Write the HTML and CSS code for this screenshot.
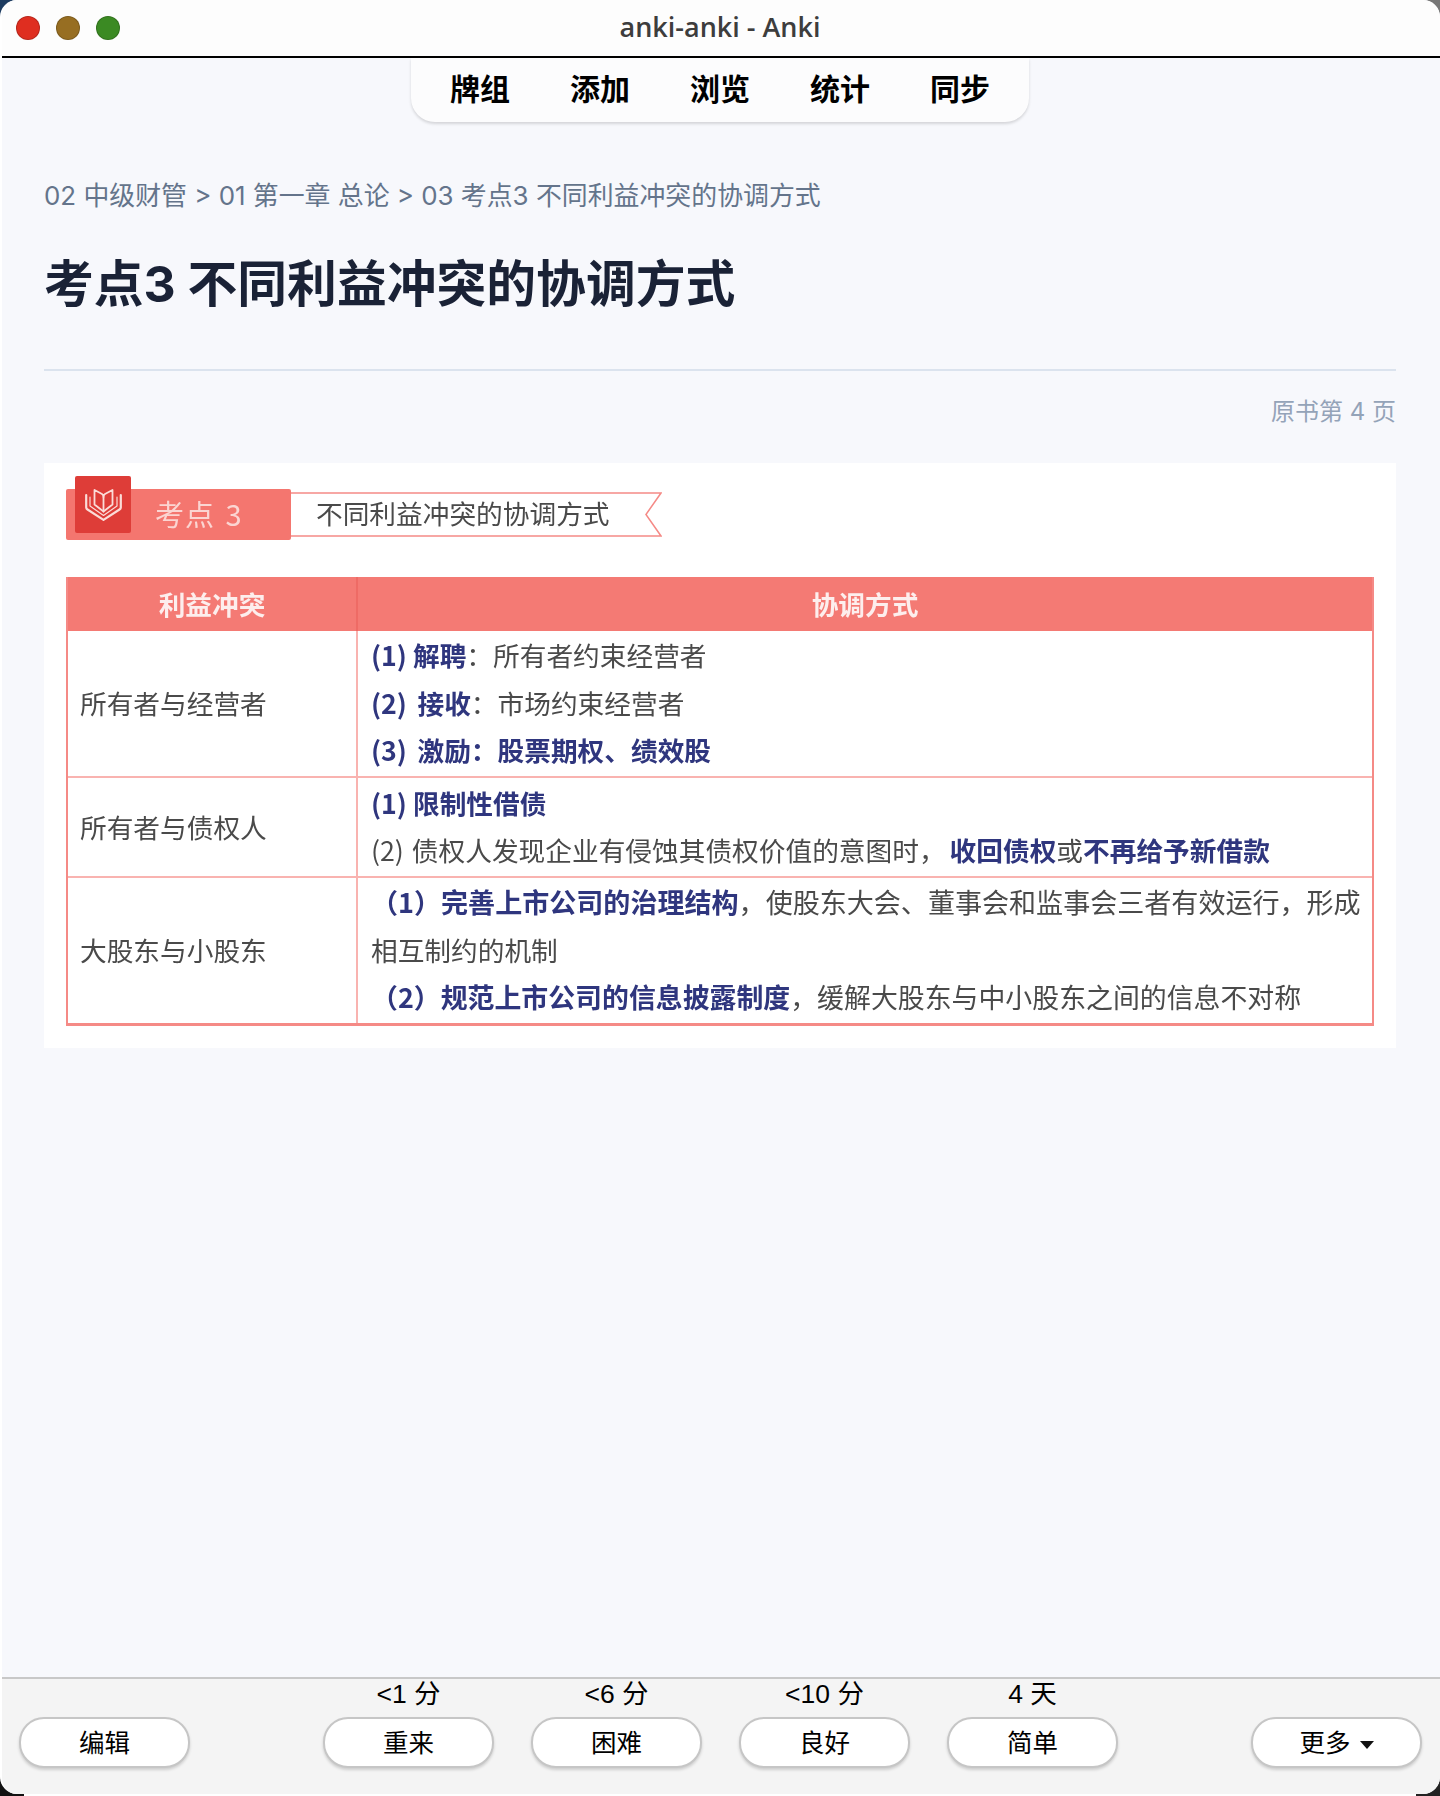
FILE: index.html
```html
<!DOCTYPE html>
<html lang="zh-CN">
<head>
<meta charset="utf-8">
<title>anki-anki - Anki</title>
<link rel="stylesheet" href="styles.css">
</head>
<body>
<div class="window">
  <header class="titlebar">
    <div class="lights"><span class="light red"></span><span class="light amber"></span><span class="light green"></span></div>
    <div class="wintitle">anki-anki - Anki</div>
  </header>
  <div class="navwrap">
    <nav class="nav"><a>牌组</a><a>添加</a><a>浏览</a><a>统计</a><a>同步</a></nav>
  </div>
  <main class="content">
    <div class="crumb">02 中级财管 &gt; 01 第一章 总论 &gt; 03 考点3 不同利益冲突的协调方式</div>
    <h1 class="title">考点3 不同利益冲突的协调方式</h1>
    <hr class="rule">
    <div class="page">原书第 4 页</div>
    <section class="figure">
      <div class="banner">
        <div class="tag">
          <span class="tagicon">
            <svg viewBox="0 0 37 33" width="37" height="33" fill="none" stroke="#fbdcd8" stroke-linejoin="round" stroke-linecap="round">
              <path stroke-width="2.200" d="M1.200 7V19.500C1.200 20.500 1.700 21 2.500 21.500L18.500 31.800L34.500 21.500C35.300 21 35.800 20.500 35.800 19.500V7"/>
              <path stroke-width="1.200" d="M5 9V18L18.500 27.500L32 18V9"/>
              <path stroke-width="1.800" d="M9.500 2L17 6C18 6.600 18.500 7.500 18.500 9C18.500 7.500 19 6.600 20 6L27.500 2V16.500L18.500 23.500L9.500 16.500Z"/>
              <path stroke-width="1.800" d="M18.500 9V23.500"/>
            </svg>
          </span>
          <span class="taglabel">考点 3</span>
        </div>
        <div class="ribbon">
          <svg class="ribbonbg" viewBox="0 0 370 45" preserveAspectRatio="none"><path d="M0 1H369L354 22.500L369 44H0" fill="#fff" stroke="#f58a86" stroke-width="1.500"/></svg>
          <span class="ribbontext">不同利益冲突的协调方式</span>
        </div>
      </div>
      <div class="table">
        <div class="thead">
          <div class="th c1">利益冲突</div>
          <div class="th c2">协调方式</div>
        </div>
        <div class="row r1">
          <div class="c1 cell">所有者与经营者</div>
          <div class="c2 lines">
            <p><b>(1) 解聘</b>：所有者约束经营者</p>
            <p class="wide"><b>(2) 接收</b>：市场约束经营者</p>
            <p class="wide"><b>(3) 激励：股票期权、绩效股</b></p>
          </div>
        </div>
        <div class="row r2">
          <div class="c1 cell">所有者与债权人</div>
          <div class="c2 lines">
            <p><b>(1) 限制性借债</b></p>
            <p class="spread">(2) 债权人发现企业有侵蚀其债权价值的意图时，<b class="aftercomma">收回债权</b>或<b>不再给予新借款</b></p>
          </div>
        </div>
        <div class="row r3">
          <div class="c1 cell">大股东与小股东</div>
          <div class="c2 lines">
            <p class="big"><b>（1）完善上市公司的治理结构</b>，使股东大会、董事会和监事会三者有效运行，形成</p>
            <p>相互制约的机制</p>
            <p class="mid"><b>（2）规范上市公司的信息披露制度</b>，缓解大股东与中小股东之间的信息不对称</p>
          </div>
        </div>
      </div>
    </section>
  </main>
  <footer class="bottombar">
    <div class="btncol"><span class="due"></span><button class="btn">编辑</button></div>
    <div class="answers">
      <div class="btncol"><span class="due">&lt;1 分</span><button class="btn">重来</button></div>
      <div class="btncol"><span class="due">&lt;6 分</span><button class="btn">困难</button></div>
      <div class="btncol"><span class="due">&lt;10 分</span><button class="btn">良好</button></div>
      <div class="btncol"><span class="due">4 天</span><button class="btn">简单</button></div>
    </div>
    <div class="btncol"><span class="due"></span><button class="btn">更多 <i class="caret"></i></button></div>
  </footer>
</div>
</body>
</html>
```

FILE: styles.css
```css
* { box-sizing: border-box; }
html, body { margin: 0; height: 100%; }
html {
  background:
    linear-gradient(#1c3b60, #1c3b60) 0 0 / 24px 24px no-repeat,
    linear-gradient(#777, #777) 100% 0 / 24px 24px no-repeat,
    linear-gradient(#111, #111) 0 100% / 24px 24px no-repeat,
    linear-gradient(#222, #222) 100% 100% / 24px 24px no-repeat,
    #fff;
}
body { font-family: Inter, "Noto Sans CJK SC", sans-serif; }

.window {
  width: 1440px;
  height: 1794px;
  display: flex;
  flex-direction: column;
  background: #f7f8fc;
  border-radius: 17px;
  overflow: hidden;
  border-left: 2px solid #fff;
}

.titlebar {
  position: relative;
  flex: none;
  height: 58px;
  margin-left: -2px;
  background: #fdfdfd;
  border-bottom: 2px solid #000;
  display: flex;
  align-items: center;
  justify-content: center;
}
.lights { position: absolute; left: 16px; top: 16px; display: flex; gap: 16px; }
.light { width: 24px; height: 24px; border-radius: 50%; border: 1px solid rgba(0,0,0,.18); }
.red { background: #df2e20; }
.amber { background: #976e22; }
.green { background: #3b8a23; }
.wintitle {
  font-family: "Open Sans", "Noto Sans", sans-serif;
  font-weight: 600;
  font-size: 27px;
  color: #3d3d3d;
  padding-bottom: 4px;
}

.navwrap { flex: none; display: flex; justify-content: center; height: 64px; margin-left: -2px; }
.nav {
  width: 618px;
  padding: 0 39px 6px;
  display: flex;
  justify-content: space-between;
  align-items: center;
  background: #fcfcfd;
  border-radius: 0 0 24px 24px;
  box-shadow: 0 2px 3px rgba(0,0,0,.14);
  font-family: "Noto Sans CJK SC", sans-serif;
  font-weight: 700;
  font-size: 30px;
  color: #000;
}

.content { flex: 1; min-height: 0; padding: 0 44px 0 42px; }
.crumb { margin-top: 54.500px; height: 38px; line-height: 38px; font-size: 25.900px; color: #64748b; }
.title { margin: 34px 0 0; font-size: 49.800px; line-height: 70px; font-weight: 700; color: #1a2236; }
.rule { margin: 50px 0 0; border: 0; height: 2px; background: #dbe3ee; }
.page { margin-top: 22px; text-align: right; font-size: 24px; line-height: 38px; color: #94a3b8; }

.figure {
  margin-top: 32px;
  height: 585px;
  padding: 13px 22px 0 22px;
  background: #fff;
  color: #4a4a4a;
  font-family: "Noto Sans CJK SC", sans-serif;
  font-size: 26.700px;
  filter: blur(.6px);
}

.banner { position: relative; display: flex; height: 64px; padding-top: 13px; }
.tag { position: relative; width: 225px; height: 51px; background: #f4766f; border-radius: 2px; }
.tagicon {
  position: absolute;
  left: 9px;
  top: -13px;
  width: 56px;
  height: 57px;
  display: flex;
  align-items: center;
  justify-content: center;
  background: #de3d38;
  border-radius: 2px;
}
.taglabel { position: absolute; left: 89px; top: 3px; font-size: 29px; line-height: 42px; letter-spacing: 1px; word-spacing: 3px; color: #fbd5d2; }
.ribbon { position: relative; width: 371px; height: 45px; margin-top: 3px; }
.ribbonbg { position: absolute; left: 0; top: 0; width: 100%; height: 100%; }
.ribbontext { position: absolute; left: 25px; top: -2px; line-height: 45px; font-size: 26.700px; color: #4a4a4a; white-space: nowrap; }

.table {
  margin-top: 37px;
  width: 1308px;
  height: 449px;
  border: 2px solid #f58a86;
  border-top: 0;
  border-bottom-width: 3px;
  display: flex;
  flex-direction: column;
}
.thead { flex: none; height: 54px; display: flex; background: #f47a74; color: #fdeeed; font-weight: 700; text-align: center; line-height: 54px; }
.c1 { flex: none; width: 290px; border-right: 2px solid #f9b3b0; }
.thead .c1 { border-right-color: #ee6b65; }
.c2 { flex: 1; min-width: 0; }
.row { display: flex; border-top: 2px solid #f9b3b0; }
.thead + .row { border-top: 0; }
.r1 { height: 146px; }
.r2 { height: 100px; }
.r3 { flex: 1; }
.cell { display: flex; align-items: center; padding-left: 12px; padding-bottom: 2px; }
.lines { padding-left: 13px; padding-bottom: 2px; display: flex; flex-direction: column; justify-content: center; white-space: nowrap; }
.lines p { margin: 0; line-height: 47.500px; }
.lines b { color: #2f367e; font-weight: 700; }
.wide { word-spacing: 4.500px; }
.spread { word-spacing: 2px; }
.aftercomma { margin-left: 4px; }
.big { font-size: 27.050px; }
.mid { font-size: 26.900px; }

.bottombar {
  flex: none;
  height: 117px;
  margin-left: -2px;
  background: #f4f4f4;
  border-top: 2px solid #c8c8c8;
  padding: 0 18px 0 19px;
  display: flex;
  justify-content: space-between;
}
.answers { display: flex; gap: 37px; }
.btncol { width: 171px; display: flex; flex-direction: column; align-items: center; }
.due {
  height: 38px;
  line-height: 30px;
  font-family: "Liberation Sans", "Noto Sans CJK SC", sans-serif;
  font-size: 26.500px;
  color: #000;
}
.btn {
  width: 171px;
  height: 51px;
  background: #fff;
  border: 2px solid #c6c6c6;
  border-radius: 25px;
  box-shadow: 0 2px 3px rgba(0,0,0,.16);
  font-family: "Liberation Sans", "Noto Sans CJK SC", sans-serif;
  font-size: 25.500px;
  color: #000;
  padding: 0 0 5px;
}
.caret {
  display: inline-block;
  width: 0;
  height: 0;
  margin-left: 2px;
  border-left: 7px solid transparent;
  border-right: 7px solid transparent;
  border-top: 8px solid #111;
  vertical-align: middle;
}
```
